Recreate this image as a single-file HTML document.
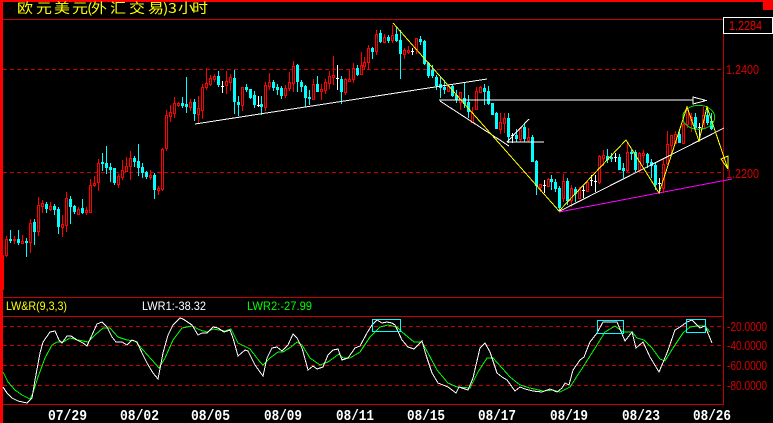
<!DOCTYPE html>
<html><head><meta charset="utf-8"><style>
html,body{margin:0;padding:0;background:#000;width:773px;height:423px;overflow:hidden}
svg{display:block}
text{font-family:"Liberation Sans",sans-serif}
</style></head><body>
<svg width="773" height="423" viewBox="0 0 773 423" xmlns="http://www.w3.org/2000/svg">
<rect width="773" height="423" fill="#000"/>
<g shape-rendering="crispEdges" fill="none">
<path d="M3 19.5H723M3 297.5H723M3 316.5H723M3 404.5H723M723.5 19V405" stroke="#c80000"/>
<path d="M3 69.5H723M3 172.5H723M3 326.5H723M3 345.5H723M3 365.5H723M3 385.5H723" stroke="#c80000" stroke-dasharray="4 3"/>
<rect x="0" y="0" width="773" height="2" fill="#f00"/>
<rect x="0" y="0" width="3" height="423" fill="#f00"/>
<rect x="3" y="255" width="1" height="35" fill="#f00"/>
<rect x="763" y="0" width="10" height="10" fill="#f00"/>
<rect x="723.5" y="17.5" width="49" height="16" stroke="#fff" fill="#000"/>

<!-- cyan candles -->
<path stroke="#0ff" d="M10.5 230V243M18.5 230V245M26.5 238V257M34.5 219V245M46.5 202V213M54.5 204V215M58.5 207V234M70.5 196V224M74.5 205V214M82.5 199V214M102.5 153V171M106.5 146V174M110.5 163V182M114.5 168V185M134.5 156V167M138.5 144V176M142.5 163V178M146.5 171V179M154.5 173V199M182.5 97V108M186.5 77V113M194.5 99V121M218.5 71V87M234.5 70V114M238.5 96V116M246.5 84V92M250.5 89V99M254.5 91V108M261.5 96V115M273.5 80V91M277.5 84V95M281.5 86V99M297.5 64V92M301.5 80V92M305.5 85V107M309.5 90V105M317.5 76V92M341.5 76V104M357.5 65V76M372.5 47V59M380.5 30V43M388.5 35V43M396.5 27V42M400.5 30V79M420.5 36V45M424.5 40V65M428.5 62V78M432.5 65V78M436.5 75V90M440.5 76V98M444.5 80V94M452.5 84V97M456.5 90V103M464.5 82V108M468.5 95V118M484.5 84V105M488.5 86V105M492.5 103V115M496.5 112V129M508.5 113V143M516.5 129V142M524.5 123V142M532.5 135V161M536.5 160V195M551.5 175V190M555.5 179V192M559.5 186V212M567.5 178V205M575.5 187V202M607.5 149V163M611.5 153V162M619.5 154V170M623.5 163V178M631.5 150V160M635.5 150V172M647.5 153V168M651.5 159V178M655.5 163V190M679.5 131V143M695.5 113V130M707.5 108V125M711.5 113V130"/>
<path stroke="#0ff" stroke-width="3" d="M10.5 239V241M18.5 239V243M26.5 241V243M34.5 222V232M46.5 204V209M54.5 206V210M58.5 209V227M70.5 199V207M74.5 206V212M82.5 208V213M102.5 162V164M106.5 163V168M110.5 167V170M114.5 168V183M134.5 158V162M138.5 161V168M142.5 167V173M146.5 172V177M154.5 175V190M182.5 103V106M186.5 104V107M194.5 102V114M218.5 76V85M234.5 78V102M238.5 102V105M246.5 87V90M250.5 89V98M254.5 95V105M261.5 104V107M273.5 82V88M277.5 87V90M281.5 88V96M297.5 65V82M301.5 82V87M305.5 86V98M309.5 97V99M317.5 84V92M341.5 79V92M357.5 68V75M372.5 48V52M380.5 33V42M388.5 37V41M396.5 34V41M400.5 40V54M420.5 39V42M424.5 41V64M428.5 63V76M432.5 70V76M436.5 77V86M440.5 84V88M444.5 87V90M452.5 86V96M456.5 95V100M464.5 98V104M468.5 102V112M484.5 88V92M488.5 91V104M492.5 103V115M496.5 113V129M508.5 118V137M516.5 135V139M524.5 127V139M532.5 137V162M536.5 161V186M551.5 179V182M555.5 182V189M559.5 188V208M567.5 181V201M575.5 189V194M607.5 156V160M611.5 157V159M619.5 157V170M623.5 168V171M631.5 152V154M635.5 152V170M647.5 154V163M651.5 162V166M655.5 165V185M679.5 134V143M695.5 117V128M707.5 115V123M711.5 121V129"/>

<!-- red candles -->
<path stroke="#f00" d="M6.5 236V257M14.5 236V244M22.5 235V244M30.5 219V253M38.5 197V236M42.5 200V213M50.5 202V211M62.5 215V237M66.5 192V232M78.5 207V215M86.5 207V215M90.5 179V213M94.5 176V187M98.5 159V191M118.5 174V188M122.5 160V180M126.5 157V172M130.5 151V180M150.5 170V180M158.5 186V195M162.5 148V191M166.5 110V151M170.5 105V122M174.5 97V118M178.5 102V107M190.5 99V111M198.5 96V123M202.5 84V119M206.5 68V90M210.5 75V86M214.5 74V82M226.5 71V94M230.5 74V91M242.5 87V111M265.5 82V111M269.5 73V90M285.5 85V98M289.5 72V91M293.5 61V92M313.5 79V100M321.5 84V100M325.5 79V94M329.5 71V89M333.5 56V85M345.5 78V95M349.5 70V82M353.5 63V83M361.5 52V75M364.5 57V70M368.5 45V70M376.5 30V55M384.5 34V43M392.5 25V43M404.5 48V59M408.5 46V54M416.5 38V54M448.5 84V92M460.5 92V110M472.5 107V123M476.5 87V110M480.5 86V93M500.5 113V134M504.5 113V133M520.5 127V142M528.5 128V142M540.5 184V192M548.5 178V187M563.5 174V202M571.5 185V207M579.5 187V199M587.5 180V192M599.5 155V184M603.5 150V166M627.5 142V172M639.5 152V173M643.5 150V165M663.5 158V193M667.5 131V165M671.5 135V154M675.5 131V144M683.5 112V143M687.5 108V128M691.5 113V132M703.5 107V129"/>
<path stroke="#f00" fill="#000" d="M5.5 239.5h2v16h-2zM13.5 239.5h2v1h-2zM21.5 241.5h2v2h-2zM29.5 223.5h2v19h-2zM37.5 205.5h2v26h-2zM41.5 203.5h2v3h-2zM49.5 206.5h2v3h-2zM61.5 224.5h2v3h-2zM65.5 198.5h2v27h-2zM77.5 209.5h2v5h-2zM85.5 210.5h2v2h-2zM89.5 185.5h2v27h-2zM93.5 183.5h2v2h-2zM97.5 163.5h2v19h-2zM117.5 176.5h2v8h-2zM121.5 170.5h2v7h-2zM125.5 166.5h2v5h-2zM129.5 158.5h2v8h-2zM149.5 175.5h2v2h-2zM157.5 188.5h2v2h-2zM161.5 149.5h2v40h-2zM165.5 115.5h2v33h-2zM169.5 112.5h2v4h-2zM173.5 103.5h2v10h-2zM177.5 103.5h2v2h-2zM189.5 102.5h2v5h-2zM197.5 108.5h2v6h-2zM201.5 87.5h2v23h-2zM205.5 83.5h2v4h-2zM209.5 78.5h2v6h-2zM213.5 76.5h2v3h-2zM225.5 81.5h2v4h-2zM229.5 77.5h2v5h-2zM241.5 87.5h2v18h-2zM264.5 85.5h2v22h-2zM268.5 82.5h2v4h-2zM284.5 88.5h2v7h-2zM288.5 82.5h2v6h-2zM292.5 66.5h2v17h-2zM312.5 84.5h2v15h-2zM320.5 89.5h2v2h-2zM324.5 82.5h2v8h-2zM328.5 76.5h2v7h-2zM332.5 75.5h2v2h-2zM344.5 79.5h2v13h-2zM348.5 79.5h2v2h-2zM352.5 68.5h2v11h-2zM360.5 65.5h2v9h-2zM363.5 62.5h2v4h-2zM367.5 48.5h2v14h-2zM375.5 34.5h2v17h-2zM383.5 37.5h2v5h-2zM391.5 35.5h2v5h-2zM403.5 50.5h2v4h-2zM407.5 50.5h2v2h-2zM415.5 38.5h2v11h-2zM447.5 86.5h2v5h-2zM459.5 92.5h2v10h-2zM471.5 113.5h2v9h-2zM475.5 91.5h2v18h-2zM479.5 87.5h2v5h-2zM499.5 122.5h2v7h-2zM503.5 118.5h2v5h-2zM519.5 128.5h2v11h-2zM527.5 137.5h2v3h-2zM539.5 184.5h2v3h-2zM547.5 179.5h2v7h-2zM562.5 181.5h2v17h-2zM570.5 188.5h2v12h-2zM578.5 189.5h2v9h-2zM586.5 182.5h2v9h-2zM598.5 156.5h2v26h-2zM602.5 155.5h2v3h-2zM626.5 152.5h2v18h-2zM638.5 153.5h2v17h-2zM642.5 153.5h2v2h-2zM662.5 164.5h2v24h-2zM666.5 144.5h2v19h-2zM670.5 135.5h2v10h-2zM674.5 134.5h2v9h-2zM682.5 124.5h2v19h-2zM686.5 110.5h2v14h-2zM690.5 117.5h2v3h-2zM702.5 115.5h2v13h-2z"/>

<!-- white crosses -->
<path stroke="#fff" d="M222.5 81V93M221 86.5h3M258.5 96V107M257 105.5h3M337.5 65V90M336 78.5h3M412.5 48V55M411 51.5h3M512.5 133V143M511 135.5h3M544.5 180V193M543 185.5h3M583.5 186V198M582 190.5h3M591.5 175V186M590 180.5h3M595.5 175V192M594 181.5h3M615.5 153V162M614 157.5h3M659.5 178V193M658 183.5h3M699.5 123V140M698 127.5h3"/>

<!-- drawing overlays -->
<path stroke="#fff" d="M195 124L487 79M439 100H693M440 101L509 146M507 142H544M507 142L529 119M560 211L724 128M693 97V104L706 100.5Z"/>
<path stroke="#f0f" d="M559 212L732 179"/>
<ellipse cx="698.7" cy="117.3" rx="16" ry="12" stroke="#00e000"/>
<path stroke="#ff0" d="M393 23L559 211L626 140L659 193L687 107L699 141L707 107L728 169V156L721 159L728 169"/>

<!-- oscillator -->
<polyline stroke="#0f0" points="3,372 8,382 15,390 22,395 30,399 33,393 38,377 45,358 52,345 57,342 63,342 70,338 78,340 88,342 95,335 103,328 110,328 118,337 127,340 135,341 143,350 152,360 159,368 165,358 173,340 182,328 192,326 200,330 207,332 213,329 225,331 231,329 238,343 250,349 260,362 263,365 270,358 278,352 283,352 291,347 297,342 302,345 310,358 320,365 328,362 339,354 343,358 350,358 360,352 370,337 380,327 388,325 397,327 402,332 414,342 422,342 428,353 437,370 448,383 457,387 470,388 478,372 487,358 493,358 502,368 510,377 520,385 530,388 543,391 553,390 560,392 570,387 583,367 597,345 605,332 615,326 623,332 632,332 637,338 644,340 652,348 660,359 665,361 673,348 683,333 690,327 697,326 705,326 710,332"/>
<polyline stroke="#fff" points="3,387 7,393 12,398 18,401 27,403 32,398 35,380 40,353 43,342 50,332 55,331 59,340 62,343 67,336 71,336 77,340 83,343 87,346 92,335 97,324 102,322 107,327 112,337 116,342 122,342 127,345 132,340 137,342 142,353 147,363 153,373 158,379 163,353 168,335 173,325 180,318 183,319 192,325 198,335 202,333 207,333 213,327 218,328 224,332 230,330 233,338 238,356 245,350 248,351 255,365 260,372 263,376 267,358 272,348 277,347 282,351 288,345 293,334 297,338 302,348 308,370 313,366 317,369 323,367 328,355 333,350 338,349 342,360 348,358 355,348 360,346 367,333 372,325 377,320 382,323 387,322 392,323 395,325 402,340 408,347 414,349 422,341 426,355 432,373 438,383 448,387 456,393 459,387 468,390 473,378 480,348 485,343 490,352 497,373 502,377 507,380 515,391 520,387 525,389 533,391 542,392 550,389 557,392 562,388 565,383 569,385 573,370 580,360 584,357 590,342 597,333 603,322 617,322 625,341 632,332 636,348 643,342 650,357 659,372 667,353 675,330 680,327 687,322 692,320 700,328 705,326 712,343"/>
<path stroke="#0ff" d="M372.5 319.5h28v12h-28zM597.5 320.5h26v13h-26zM686.5 319.5h19v13h-19z"/>
</g>

<text transform="scale(1,.85)" y="15.3" font-size="16" fill="#ff0" x="17 36 54 72 87 91 110 129 148 163 168 178 192" style='font-family:"WenQuanYi Zen Hei","Noto Sans CJK SC",sans-serif'>欧元美元(外汇交易)3小时</text>

<g font-size="13" fill="#d80000">
<text x="729" y="30" textLength="33" lengthAdjust="spacingAndGlyphs" fill="#f00000">1.2284</text>
<text x="726" y="74" textLength="33" lengthAdjust="spacingAndGlyphs">1.2400</text>
<text x="726" y="178" textLength="33" lengthAdjust="spacingAndGlyphs">1.2200</text>
<text x="727" y="331" textLength="40" lengthAdjust="spacingAndGlyphs">-20.0000</text>
<text x="727" y="350" textLength="40" lengthAdjust="spacingAndGlyphs">-40.0000</text>
<text x="727" y="370" textLength="40" lengthAdjust="spacingAndGlyphs">-60.0000</text>
<text x="727" y="390" textLength="40" lengthAdjust="spacingAndGlyphs">-80.0000</text>
</g>
<g font-size="12">
<text x="6" y="310" textLength="61" lengthAdjust="spacingAndGlyphs" fill="#ff0">LW&amp;R(9,3,3)</text>
<text x="142" y="310" textLength="64" lengthAdjust="spacingAndGlyphs" fill="#fff">LWR1:-38.32</text>
<text x="247" y="310" textLength="65" lengthAdjust="spacingAndGlyphs" fill="#0f0">LWR2:-27.99</text>
</g>
<g font-size="15" font-weight="bold" fill="#fff" style='font-family:"Liberation Mono",monospace'>
<text style='font-family:"Liberation Mono",monospace' x="48" y="420" textLength="39" lengthAdjust="spacingAndGlyphs">07/29</text>
<text style='font-family:"Liberation Mono",monospace' x="120" y="420" textLength="39" lengthAdjust="spacingAndGlyphs">08/02</text>
<text style='font-family:"Liberation Mono",monospace' x="191" y="420" textLength="39" lengthAdjust="spacingAndGlyphs">08/05</text>
<text style='font-family:"Liberation Mono",monospace' x="264" y="420" textLength="38" lengthAdjust="spacingAndGlyphs">08/09</text>
<text style='font-family:"Liberation Mono",monospace' x="336" y="420" textLength="38" lengthAdjust="spacingAndGlyphs">08/11</text>
<text style='font-family:"Liberation Mono",monospace' x="407" y="420" textLength="38" lengthAdjust="spacingAndGlyphs">08/15</text>
<text style='font-family:"Liberation Mono",monospace' x="478" y="420" textLength="38" lengthAdjust="spacingAndGlyphs">08/17</text>
<text style='font-family:"Liberation Mono",monospace' x="550" y="420" textLength="38" lengthAdjust="spacingAndGlyphs">08/19</text>
<text style='font-family:"Liberation Mono",monospace' x="622" y="420" textLength="38" lengthAdjust="spacingAndGlyphs">08/23</text>
<text style='font-family:"Liberation Mono",monospace' x="693" y="420" textLength="38" lengthAdjust="spacingAndGlyphs">08/26</text>
</g>
</svg>
</body></html>
